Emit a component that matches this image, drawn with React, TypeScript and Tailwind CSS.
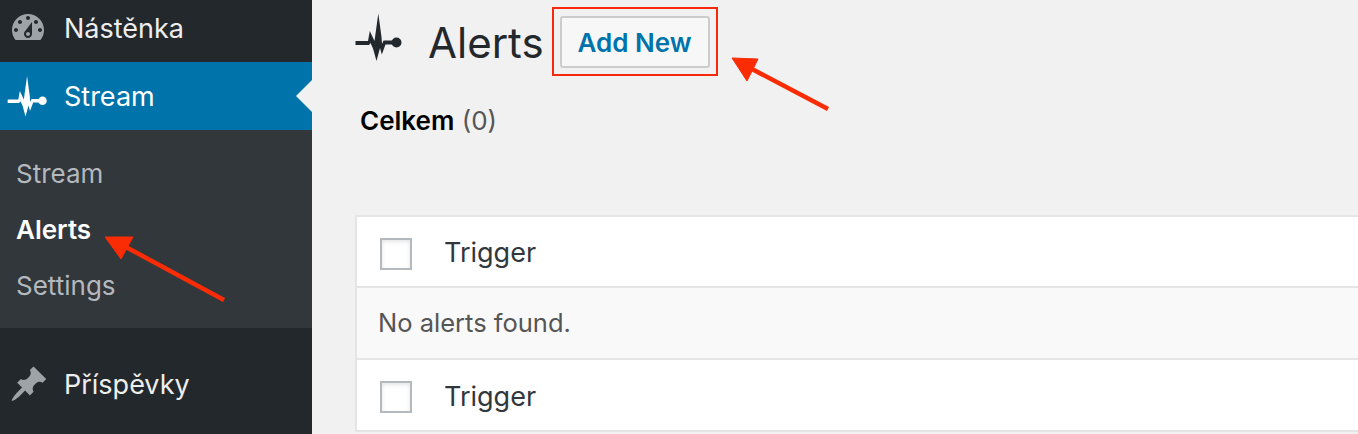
const pulse =
  "M5.5 31 H18 L19.8 21 L24.5 31 L28.3 3.5 L31.5 27 L32 34 L33.5 30.5 H43 V34.5 H35.5 L31.8 44.5 L30 38 L26.5 51 L23 38.5 L20.5 33 L19 35 H5.5Z";

function PulseIcon({ className }: { className: string }) {
  return (
    <svg viewBox="0 0 60 55" className={className} fill="currentColor">
      <path d={pulse} />
      <circle cx="46.5" cy="32.5" r="5" />
    </svg>
  );
}

function DashboardIcon() {
  return (
    <svg viewBox="0 0 20 20" className="h-10 w-10 shrink-0 text-[#9ea3a8]" fill="currentColor">
      <path
        fillRule="evenodd"
        d="M3.76 16h12.48c1.1-1.37 1.76-3.11 1.76-5 0-4.42-3.58-8-8-8s-8 3.58-8 8c0 1.89.66 3.63 1.76 5zM10 4c.55 0 1 .45 1 1s-.45 1-1 1-1-.45-1-1 .45-1 1-1zM6 6c.55 0 1 .45 1 1s-.45 1-1 1-1-.45-1-1 .45-1 1-1zm8 0c.55 0 1 .45 1 1s-.45 1-1 1-1-.45-1-1 .45-1 1-1zm-5.37 5.55L12 7v6c0 1.1-.9 2-2 2s-2-.9-2-2c0-.57.24-1.08.63-1.45zM4 10c.55 0 1 .45 1 1s-.45 1-1 1-1-.45-1-1 .45-1 1-1zm12 0c.55 0 1 .45 1 1s-.45 1-1 1-1-.45-1-1 .45-1 1-1zm-5 3c0-.55-.45-1-1-1s-1 .45-1 1 .45 1 1 1 1-.45 1-1z"
      />
    </svg>
  );
}

function PinIcon() {
  return (
    <svg viewBox="0 0 20 20" className="h-10 w-10 shrink-0 text-[#9ea3a8]" fill="currentColor">
      <path d="M10.44 3.02l1.82-1.82 6.36 6.35-1.83 1.82c-1.05-.68-2.48-.57-3.41.36l-.75.75c-.92.93-1.04 2.35-.35 3.41l-1.83 1.82-2.41-2.41-2.8 2.79c-.42.42-3.38 2.71-3.8 2.29s1.86-3.39 2.28-3.81l2.79-2.79L4.1 9.36l1.83-1.82c1.05.69 2.48.57 3.4-.36l.75-.75c.93-.92 1.05-2.35.36-3.41z" />
    </svg>
  );
}

function Sidebar() {
  return (
    <aside className="flex w-[312px] shrink-0 flex-col bg-[#23282d]">
      <div className="flex h-[62px] items-center pb-[6px] pl-2 text-[#eeeeee]">
        <DashboardIcon />
        <span className="ml-4 text-[27px] leading-none">Nástěnka</span>
      </div>

      <div className="relative flex h-[68px] items-center bg-[#0073aa] text-white">
        <PulseIcon className="ml-[3px] h-[47px] w-[51px] shrink-0" />
        <span className="ml-[10px] text-[27px] leading-none">Stream</span>
        <div className="absolute right-0 top-[18px] h-0 w-0 border-y-[16px] border-r-[16px] border-y-transparent border-r-[#f1f1f1]" />
      </div>

      <div className="flex flex-col bg-[#32373c] py-[15px] pl-4 text-[26px] text-[#b4b9be]">
        <div className="flex h-[56px] items-center">Stream</div>
        <div className="flex h-[56px] items-center font-semibold text-white">Alerts</div>
        <div className="flex h-[56px] items-center">Settings</div>
      </div>

      <div className="flex items-center pl-[9px] pt-9 text-[#eeeeee]">
        <PinIcon />
        <span className="ml-[15px] text-[27px] leading-none">Příspěvky</span>
      </div>
    </aside>
  );
}

function TableRow({ label, first }: { label: string; first?: boolean }) {
  return (
    <div className={first ? "flex h-[69px] items-center bg-white pl-[23px] pt-1" : "flex h-[70px] items-center bg-white pl-[23px] pt-1"}>
      <div className="h-8 w-8 border-2 border-[#b4b9be] bg-white shadow-[inset_0_2px_4px_rgba(0,0,0,0.1)]" />
      <span className="mb-[2px] ml-8 text-[27px] leading-none text-[#32373c]">{label}</span>
    </div>
  );
}

function AlertsPage() {
  return (
    <main className="min-w-0 flex-1 pl-[38px]">
      <div className="flex h-[88px] items-start">
        <PulseIcon className="mt-[10px] h-[55px] w-[60px] shrink-0 text-[#23282d]" />
        <h1 className="ml-[18px] mt-[18px] text-[42px] font-normal leading-[50px] text-[#23282d]">Alerts</h1>
        <div className="ml-2 mt-[7px] border-2 border-[#f6290c] px-[6px] pb-[6px] pt-[7px]">
          <div className="flex h-[52px] w-[150px] items-center justify-center rounded-[3px] border-2 border-[#cccccc] bg-[#f7f7f7] text-[26px] font-semibold text-[#0073aa]">
            Add New
          </div>
        </div>
      </div>

      <div className="mt-[17px] pl-[10px] text-[26px] leading-8">
        <span className="font-semibold text-black">Celkem</span> <span className="text-[#555555]">(0)</span>
      </div>

      <div className="ml-[5px] mt-[78px] flex flex-col gap-[2px] border-2 border-r-0 border-[#e5e5e5] bg-[#e5e5e5]">
        <TableRow label="Trigger" first />
        <div className="flex h-[70px] items-center bg-[#f9f9f9] pl-[21px] text-[25.5px] text-[#555555]">No alerts found.</div>
        <TableRow label="Trigger" />
      </div>
    </main>
  );
}

export default function App() {
  return (
    <div className="relative flex h-[434px] w-[1358px] overflow-hidden bg-[#f1f1f1] font-['Inter',sans-serif]">
      <Sidebar />
      <AlertsPage />

      {/* annotation arrows */}
      <svg className="pointer-events-none absolute inset-0 h-full w-full" viewBox="0 0 1358 434">
        <g fill="#f92c05" stroke="#f92c05">
          <line x1="224" y1="300" x2="124" y2="246" strokeWidth="4.5" />
          <polygon points="105,237 133,237 121,259" strokeWidth="1" />
          <line x1="828" y1="109" x2="750" y2="68" strokeWidth="4.5" />
          <polygon points="732,58 758,59 747,81" strokeWidth="1" />
        </g>
      </svg>
    </div>
  );
}
